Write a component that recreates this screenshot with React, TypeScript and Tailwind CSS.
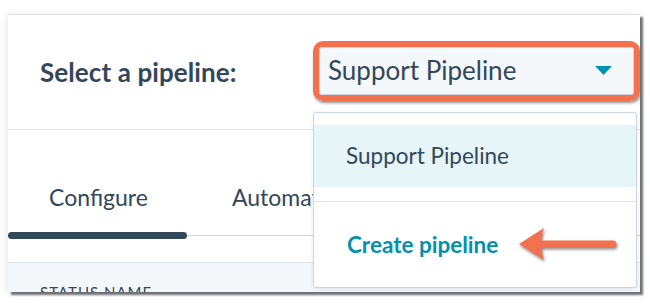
import React from "react";

const font = { fontFamily: "Lato, 'Open Sans', sans-serif" };

function Caret() {
  return (
    <svg width="17" height="9" viewBox="0 0 17 9">
      <path d="M0 0 H17 L8.5 9 Z" fill="#0091ae" />
    </svg>
  );
}

function Arrow() {
  return (
    <svg
      width="108"
      height="42"
      viewBox="0 0 108 42"
      className="absolute left-[507px] top-[209px] drop-shadow-[1px_2px_1.5px_rgba(0,0,0,0.45)]"
    >
      <path
        d="M4 20 L29 4 Q26 12 27 16.5 L98 16.5 A3.5 3.5 0 0 1 98 23.5 L27 23.5 Q26 28 29 36 Z"
        fill="#f4714f"
      />
    </svg>
  );
}

export default function App() {
  return (
    <div className="w-[650px] h-[304px] bg-white pl-[8px] pt-[14px]" style={font}>
      <div className="relative w-[632px] h-[278px] bg-white border-t border-[#dcdfe3] overflow-hidden shadow-[3px_3px_2px_rgba(60,64,70,0.75),-3px_0_6px_rgba(0,0,0,0.07)]">
        <div className="h-[115px] flex items-center justify-between pl-[32px] border-b border-[#dfe3eb]">
          <span className="text-[26px] font-bold text-[#33475b] tracking-[0.1px]">Select a pipeline:</span>
          <div className="w-[327px] h-[60px] mb-[3px] border-[6px] border-[#f4714f] rounded-[10px] shadow-[1px_2px_3px_rgba(0,0,0,0.45)]">
            <div className="h-full flex items-center justify-between pl-[8px] pr-[21px] bg-[#f5f8fa] border border-[#cbd6e2] rounded-[3px]">
              <span className="text-[26px] text-[#33475b]">Support Pipeline</span>
              <Caret />
            </div>
          </div>
        </div>

        <div className="flex h-[106px] border-b border-[#cbd6e2]">
          <div className="relative w-[179px] h-[105px] pt-[52px] pl-[2px] text-center text-[23px] leading-[30px] text-[#33475b]">
            Configure
            <span className="absolute left-0 right-0 -bottom-[4px] h-[7px] rounded-full bg-[#33475b]" />
          </div>
          <div className="pl-[45px] pt-[52px] text-[23px] leading-[30px] text-[#33475b]">
            Automation
          </div>
        </div>

        <div className="mt-[26px] border-t border-[#dfe3eb] bg-[#f5f8fa] h-[60px] pl-[32px] pt-[17px]">
          <span className="text-[15px] tracking-[1px] text-[#33475b]">STATUS NAME</span>
        </div>

        <div className="absolute left-[305px] top-[97px] w-[324px] h-[176px] flex flex-col bg-white border border-[#cbd6e2] rounded-[3px] shadow-[0_1px_4px_rgba(0,0,0,0.08)] pt-[12px]">
          <div className="h-[62px] flex items-center pl-[32px] bg-[#e5f5f8] text-[22.5px] text-[#33475b]">
            Support Pipeline
          </div>
          <div className="mt-[14px] flex-1 flex items-center pl-[33px] border-t border-[#dfe3eb] text-[22.5px] font-bold text-[#0091ae]">
            Create pipeline
          </div>
        </div>

        <Arrow />
      </div>
    </div>
  );
}
